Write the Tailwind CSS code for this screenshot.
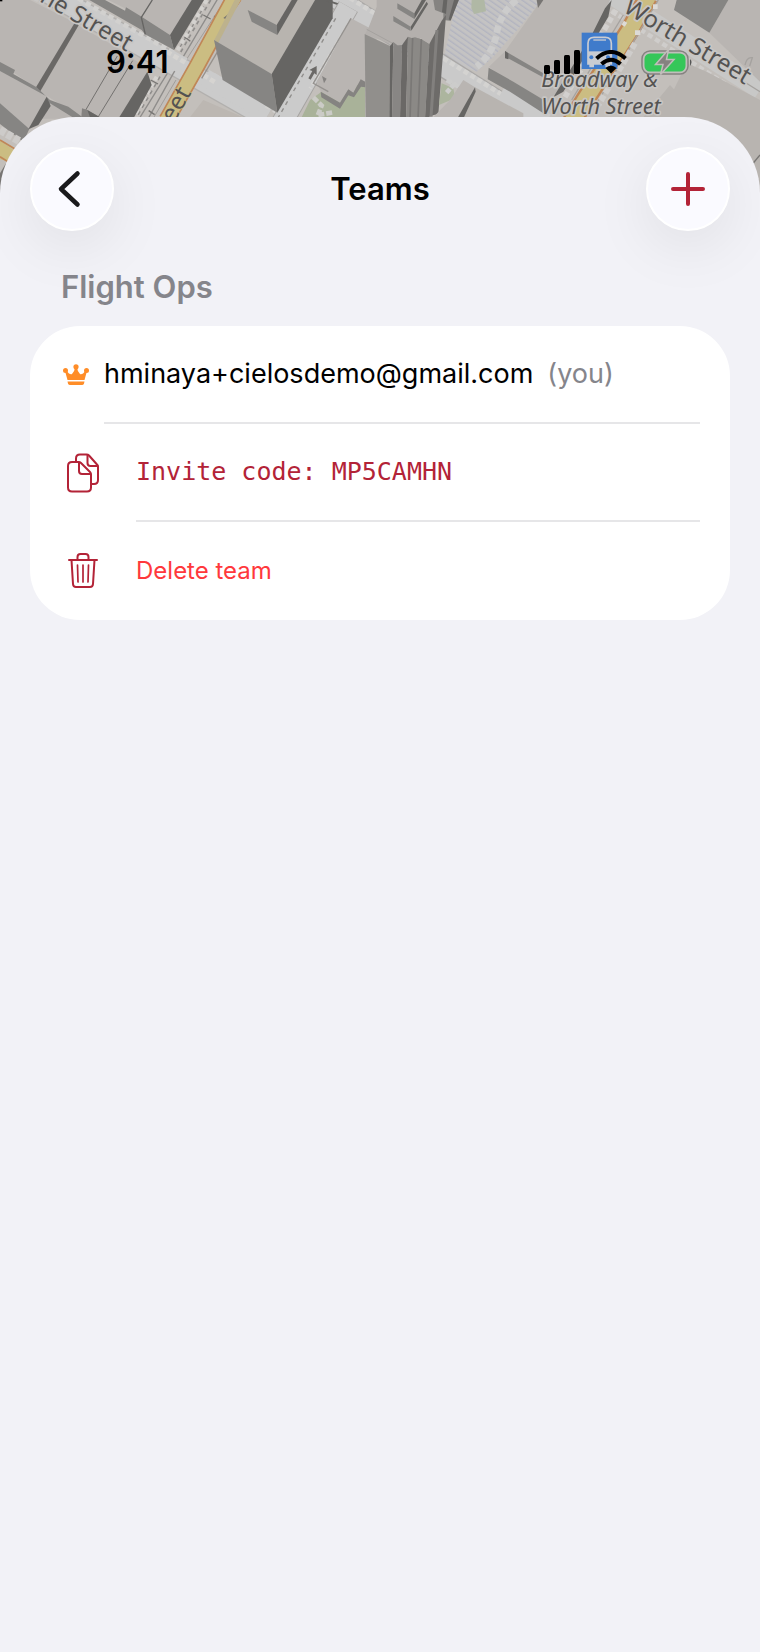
<!DOCTYPE html>
<html lang="en">
<head>
<meta charset="utf-8">
<meta name="viewport" content="width=device-width, initial-scale=1">
<title>Teams</title>
<script src="https://cdn.jsdelivr.net/npm/@tailwindcss/browser@4"></script>
</head>
<body class="relative flex min-h-screen flex-col bg-[#f2f2f7] font-['Inter','Liberation_Sans',sans-serif] text-black">

<!-- Map backdrop behind the sheet, three units per pixel -->
<svg class="absolute inset-x-0 top-0 h-[230px] w-full" viewBox="0 0 2280 690" preserveAspectRatio="xMidYMin slice" aria-hidden="true">
  <defs>
    <pattern id="hatch" width="14" height="14" patternUnits="userSpaceOnUse" patternTransform="rotate(-55)"><rect width="14" height="14" fill="#c4c3c3"/><rect width="4" height="14" fill="#b2b4c0"/></pattern>
  </defs>
  <rect width="2280" height="690" fill="#c3bfbb"/>
  <!-- plaza -->
  <path d="M1370 0H1625L1560 80L1480 170L1430 215L1330 180Z" fill="url(#hatch)"/>
  <path d="M1415 0h38l5 34-36 8-8-18z" fill="#b0b8a5"/>
  <path d="M1550 0Q1500 40 1490 100T1430 200" fill="none" stroke="#cccccc" stroke-width="20" stroke-dasharray="22 10"/>
  <!-- grey streets -->
  <g fill="none">
    <path d="M60 -70L800 352" stroke="#b2b0ae" stroke-width="68"/>
    <path d="M60 -70L800 352" stroke="#cbcbcb" stroke-width="60"/>
    <path d="M190 -30L520 158M640 225L830 335" stroke="#d2d1cf" stroke-width="14" stroke-dasharray="16 10"/>
    <path d="M1000 -10L1560 345" stroke="#aaa8a6" stroke-width="66"/>
    <path d="M1000 -10L1560 345" stroke="#cacaca" stroke-width="58"/>
    <path d="M1050 -6L1140 50M1330 175L1540 305" stroke="#d4d3d1" stroke-width="14" stroke-dasharray="15 9"/>
    <path d="M1045 20L845 370" stroke="#a6a4a2" stroke-width="66"/>
    <path d="M1045 20L845 370" stroke="#cbcbcb" stroke-width="60"/>
    <path d="M1007 55L835 352" stroke="#8f8d8b" stroke-width="4" stroke-dasharray="12 12"/>
    <path d="M1050 65L930 265" stroke="#d6d5d3" stroke-width="10" stroke-dasharray="14 9"/>
    <path d="M1500 285L1640 365" stroke="#cacaca" stroke-width="50"/>
    <path d="M1810 -30L2280 270" stroke="#c8c8c7" stroke-width="56"/>
    <path d="M1790 5L2260 305" stroke="#cfcdcb" stroke-width="13" stroke-dasharray="16 10"/>
  </g>
  <!-- parallel tracks and avenue, left -->
  <g fill="none">
    <path d="M657 -10L520 220L420 400M612 20L535 150M502 220L420 352" stroke="#8f8d8b" stroke-width="4"/>
    <path d="M682 -10L555 185M528 240L445 380" stroke="#a19e9b" stroke-width="3"/>
    <path d="M632 0L540 160M480 230L410 352" stroke="#918f8d" stroke-width="5" stroke-dasharray="12 12"/>
    <path d="M610 45l22 12M642 48l16 10M553 110l18 14M452 240l22 12M446 332l18 12" stroke="#777573" stroke-width="4"/>
    <path d="M620 0L530 155M470 230L400 352" stroke="#d4d2cf" stroke-width="12" stroke-dasharray="13 10"/>
    <path d="M704 -10L590 200L500 360" stroke="#c08757" stroke-width="50"/>
    <path d="M704 -10L590 200L500 360" stroke="#cbbd82" stroke-width="40"/>
    <path d="M500 170L550 198M615 233L780 325" stroke="#cbcbcb" stroke-width="52"/>
    <path d="M500 155L560 190M610 225L650 250" stroke="#d6d4d1" stroke-width="14" stroke-dasharray="16 8"/>
    <path d="M745 0L605 235" stroke="#96918c" stroke-width="4"/>
  </g>
  <path d="M570 352L610 300L730 352Z" fill="#bcb7b2"/>
  <path d="M668 76l10-18-8-4 16-13 1 23-7-3-8 18z" fill="#77756f"/>

  <!-- left blocks -->
  <path d="M0 0H90L228 70L110 265L0 190Z" fill="#b9b5b2"/>
  <path d="M232 75L350 142L455 215L370 352H245L120 275Z" fill="#b9b5b2"/>
  <path d="M226 65L236 76L120 275L108 262Z" fill="#6a6866"/>
  <path d="M352 168L256 332M398 182L295 350" stroke="#73716f" stroke-width="3" fill="none"/>
  <path d="M0 186L45 210L40 222L110 262L150 300L205 320L246 350V356H215L140 308L0 215Z" fill="#868583"/>
  <path d="M442 215L455 255L400 356H355Z" fill="#666563"/>
  <path d="M150 310L225 356H118Z" fill="#b9b5b2"/>
  <path d="M246 325L262 330L300 352H244Z" fill="#858381"/><path d="M262 330L300 352H270Z" fill="#666563"/>
  <path d="M0 213L142 290L90 387L0 335Z" fill="#b9b5b2"/>
  <path d="M0 310L88 387L70 425L0 372Z" fill="#868583"/>
  <path d="M140 290L152 318L115 375L85 388Z" fill="#666563"/>
  <path d="M0 390L70 430" stroke="#cdcbc9" stroke-width="24" stroke-dasharray="18 6"/>
  <path d="M0 422L50 455L30 485L0 478Z" fill="#cbbd82"/>
  <path d="M0 420L50 450M0 470L35 492" stroke="#c08757" stroke-width="5"/>
  <path d="M0 500L30 510V600H0Z" fill="#c2bfbc"/><path d="M0 520L18 490V560L0 600Z" fill="#777573"/>
  <!-- top blocks -->
  <path d="M325 0H575L510 105L425 50Z" fill="#b9b5b2"/>
  <path d="M268 0H315L375 32L378 22L425 50L510 105L522 150L435 103L425 90Z" fill="#868583"/>
  <path d="M575 0H612L522 150L510 105Z" fill="#666563"/>
  <path d="M457 0L424 52L436 103" stroke="#666563" stroke-width="4" fill="none"/>

  <!-- central left building -->
  <path d="M725 0H945L815 222L642 122Z" fill="#b8b4af"/>
  <path d="M704 0H722L655 128L642 122Z" fill="#bdb28d"/>
  <path d="M642 120L815 222L832 338L668 240Z" fill="#868583"/>
  <path d="M945 0H998V55L832 338L815 222Z" fill="#666563"/>
  <path d="M743 30L830 75L832 105L755 65Z" fill="#868583"/><path d="M875 0H893L832 105L830 75Z" fill="#666563"/>
  <path d="M985 0L1015 10L1010 14L980 4Z" fill="#666563"/>
  <path d="M925 235l12-22-9-3 22-12 0 27-7-5-11 19z" fill="#6b6967"/>

  <!-- park and middle block -->
  <path d="M905 352L930 300L965 275L1095 250V352Z" fill="#a9b299"/>
  <path d="M940 292l25 25-12 30M955 345l45-8" stroke="#cbcbc6" stroke-width="14" stroke-dasharray="18 6" fill="none"/>
  <path d="M1053 55L1130 95V250L1080 240L1060 278L1045 270L1020 308L963 275L950 245Z" fill="#b9b5b2"/>
  <path d="M962 275L1020 308L1045 268L1060 278L1082 238L1096 245V262L1083 260L1062 292L1045 286L1020 326L964 292Z" fill="#858381"/>
  <path d="M1053 55L940 250L985 275" stroke="#95928f" stroke-width="4" fill="none"/>
  <path d="M966 228l14 8-8 14z" fill="#858381"/>

  <!-- tower -->
  <path d="M1105 85L1130 20V0H1300L1338 45L1325 65L1288 132L1262 115H1225L1205 135H1180L1095 102Z" fill="#b4b0ad"/>
  <path d="M1300 0H1377L1350 62L1330 60V40L1305 30Z" fill="#858381"/><path d="M1330 0h12l-4 42-12-6zM1362 0h14l-24 62-6-4z" fill="#666563"/>
  <path d="M1192 10L1243 40V57L1192 26ZM1180 48L1232 80V93L1180 64Z" fill="#868583"/>
  <path d="M1243 40L1265 0H1278L1243 57ZM1232 80L1280 5L1284 12L1234 92Z" fill="#666563"/>
  <path d="M1100 88L1290 190" stroke="#a5a29f" stroke-width="3"/>
  <path d="M1094 102L1170 138L1168 356H1097Z" fill="#918f8c"/>
  <path d="M1170 138L1180 126L1176 356H1168Z" fill="#666563"/>
  <path d="M1180 126L1192 136L1206 135L1200 356H1176Z" fill="#888684"/>
  <path d="M1206 135L1224 110L1218 356H1200Z" fill="#6a6866"/>
  <path d="M1224 110L1235 114L1245 112L1265 118L1288 132L1275 356H1218Z" fill="#8b8986"/>
  <path d="M1238 114L1230 356M1264 118L1254 356" stroke="#7a7876" stroke-width="5"/>
  <path d="M1288 132L1325 62L1338 45L1315 342L1298 346L1275 356Z" fill="#6d6b69"/>
  <path d="M1311 90L1293 350" stroke="#82807e" stroke-width="9"/>
  <path d="M1325 250l35 15 5 30-48 20z" fill="#acb59e"/><path d="M1340 240l50 28M1365 250l-25 28" stroke="#cccccb" stroke-width="14" stroke-dasharray="18 5"/>

  <!-- right-middle blocks -->
  <path d="M1390 240L1425 262L1375 352H1300L1350 300Z" fill="#b9b5b2"/>
  <path d="M1425 262L1570 340V352H1390Z" fill="#b8b4b0"/>
  <path d="M1425 262L1427 275L1392 352H1374Z" fill="#666563"/>
  <path d="M1467 200L1516 153L1610 20L1620 0H1830L1790 85L1675 272L1620 330Z" fill="#b9b5b2"/>
  <path d="M1466 203L1540 245L1640 305L1630 340L1530 275L1463 238Z" fill="#868583"/>
  <path d="M1515 153L1630 220L1640 238L1515 170Z" fill="#868583"/>
  <path d="M1515 153V175L1525 178V160Z" fill="#666563"/>
  <path d="M1610 0H1630L1614 24Z" fill="#777573"/>
  <path d="M1835 0L1825 50L1745 185L1690 275L1660 292L1775 105L1815 25Z" fill="#666563"/>
  <path d="M1848 30L1690 300" stroke="#d2d0ce" stroke-width="16" stroke-dasharray="17 9"/>
  <path d="M1870 45L1715 300" stroke="#a5a29f" stroke-width="4"/>

  <!-- right-hand avenue -->
  <path d="M1945 -10L1890 90L1755 300L1715 365" stroke="#c08757" stroke-width="60" fill="none"/>
  <path d="M1945 -10L1890 90L1755 300L1715 365" stroke="#cbbd82" stroke-width="46" fill="none"/>
  <path d="M1975 0L1790 310" stroke="#a6a3a0" stroke-width="4"/>
  <path d="M1905 130L1795 315" stroke="#cfcdcb" stroke-width="18" stroke-dasharray="18 8"/>
  <path d="M1973 20l-14 0M1921 98l-16 0M1868 68l10 6" stroke="#dcdad7" stroke-width="14"/>
  <path d="M2060 190L2120 215L2280 300V690H2200L1930 352L2010 255L2022 268Z" fill="#b8b4b0"/>
  <path d="M2185 0H2280V245L2128 98Z" fill="#b9b5b2"/>
  <path d="M2030 0H2185L2128 98L2022 30Z" fill="#868583"/>
  <path d="M2235 195q5-25 22-22l-8 25M2200 225L2280 275" stroke="#a5a29f" stroke-width="4" fill="none"/>
  <path d="M2255 495L2280 465" stroke="#777573" stroke-width="4"/>

  <!-- bus stop -->
  <rect x="1745" y="98" width="107" height="109" fill="#3f7bcb"/>
  <g fill="none" stroke="#c9ccd2" stroke-width="5">
    <path d="M1764 192V130Q1764 112 1782 112H1816Q1834 112 1834 130V192Z"/>
    <path d="M1780 120H1818" stroke-width="4"/>
  </g>
  <path d="M1764 154H1834V192H1764Z" fill="#c9ccd2"/>
  <circle cx="1774" cy="172" r="6" fill="#3f7bcb"/><circle cx="1824" cy="172" r="6" fill="#3f7bcb"/>
  <path d="M1768 190h14v12h-14zM1816 190h14v12h-14z" fill="#c9ccd2"/>

  <!-- labels -->
  <g font-family="'Noto Sans','Open Sans',sans-serif" fill="#545352" stroke="#c8c6c4" stroke-width="10" stroke-linejoin="round" paint-order="stroke" font-size="72">
    <text transform="translate(100 -6) rotate(30)">ine Street</text>
    <text transform="translate(1867 34) rotate(31)">Worth Street</text>
    <text transform="translate(494 418) rotate(-60)" stroke="#cbbd82" stroke-width="4">treet</text>
    <g font-style="italic" font-size="65">
      <text x="1624" y="260">Broadway &amp;</text>
      <text x="1624" y="341">Worth Street</text>
    </g>
  </g>
  <path d="M0 0H7V4H0Z"/>
</svg>

<header class="relative flex h-[117px] items-center justify-between pt-1.5 pr-[67px] pl-[106px]">
  <time class="text-[31px] leading-9 font-semibold">9:41</time>
  <div class="flex items-center gap-3.5">
    <svg class="h-6 w-[37px]" viewBox="0 0 37 24" role="img" aria-label="Signal strength"><rect y="15" width="6" height="9" rx="1.5"/><rect x="10" y="10" width="6" height="14" rx="1.5"/><rect x="20" y="5" width="6" height="19" rx="1.5"/><rect x="30" width="6" height="24" rx="1.5"/></svg>
    <svg class="h-6 w-8" viewBox="0 0 32 24" role="img" aria-label="Wi-Fi"><g fill="none" stroke="#000" stroke-width="4"><path d="M1.500 8.500Q16 -4.500 30.500 8.500"/><path d="M6.500 14Q16 5.500 25.500 14"/></g><path d="M10.500 18Q16 13.500 21.500 18L16 23.500Z"/></svg>
    <svg class="h-7 w-[52px]" viewBox="0 0 52 28" role="img" aria-label="Battery charging"><rect x="1" y="3" width="46" height="23" rx="8" fill="#c1bebb" stroke="#858280" stroke-width="1.500"/><rect x="3.500" y="5.500" width="41" height="18" rx="5.500" fill="#35c759"/><path d="M49 11q3 3 0 7z" fill="#555"/><path d="M27.500 1.500L14.500 16.500H22L19.500 26.500L33 11.500H25.500Z" fill="#858280" stroke="#c1bebb" stroke-width="1.500"/></svg>
  </div>
</header>

<main class="relative grow overflow-hidden rounded-t-[76px] bg-[#f2f2f7] px-[30px] pt-[30px]">
  <div class="flex items-center justify-between">
    <button type="button" aria-label="Back" class="flex size-[84px] items-center justify-center rounded-full border-2 border-white bg-[#fafaff] shadow-[0_16px_60px_rgba(0,0,0,0.08)]">
      <svg class="size-10" viewBox="0 0 40 40" fill="none" stroke="#1a1a1c" stroke-width="4.500" stroke-linecap="round" stroke-linejoin="round"><path d="M25.500 4.500L9 20L25.500 35.500"/></svg>
    </button>
    <h1 class="text-[31px] leading-9 font-semibold">Teams</h1>
    <button type="button" aria-label="Add team" class="flex size-[84px] items-center justify-center rounded-full border-2 border-white bg-[#fafaff] shadow-[0_16px_60px_rgba(0,0,0,0.08)]">
      <svg class="size-10" viewBox="0 0 40 40" fill="none" stroke="#b32337" stroke-width="4" stroke-linecap="round"><path d="M20 5V35M5 20H35"/></svg>
    </button>
  </div>

  <section aria-labelledby="team-name">
    <h2 id="team-name" class="mt-9 mb-[19px] px-[31px] text-[31px] leading-10 font-semibold text-[#85858b]">Flight Ops</h2>
    <ul class="rounded-[50px] bg-white pr-[30px] pl-8">
      <li class="flex h-[98px] items-center">
        <svg class="mr-3.5 h-[22px] w-7 shrink-0" viewBox="0 0 28 22" fill="#ff8d28" role="img" aria-label="Owner"><circle cx="3.500" cy="6.500" r="2.500"/><circle cx="14" cy="2.800" r="2.600"/><circle cx="24.500" cy="6.500" r="2.500"/><path d="M3 7L4.500 6.500Q8 11.500 10 10Q12.500 8 13 3.500H15Q15.500 8 18 10Q20 11.500 23.500 6.500L25 7L22.500 16H5.500Z"/><path d="M5.500 17.500H22.500L22 19.500Q21.500 21 20 21H8Q6.500 21 6 19.500Z"/></svg>
        <div class="flex h-full grow items-center gap-3.5 border-b-2 border-[#e6e6e8] text-[27px] leading-9">
          <span>hminaya+cielosdemo@gmail.com</span>
          <span class="text-[#85858b]">(you)</span>
        </div>
      </li>
      <li>
        <button type="button" class="flex h-[98px] w-full items-center text-left">
          <svg class="mr-[3px] ml-[5px] h-10 w-8 shrink-0" viewBox="0 0 32 40" fill="none" stroke="#b32337" stroke-width="2" stroke-linecap="round" stroke-linejoin="round"><path d="M24 31H27Q31 31 31 27V13.500Q31 12.500 30 11.500L22 2.500Q21 1.500 19.500 1.500H13Q9 1.500 9 5.500V9"/><path d="M20.500 2V10Q20.500 13 23.500 13H30.500"/><path d="M5 9H11.500Q13 9 14 10L23 19Q24 20 24 21.500V34.500Q24 38.500 20 38.500H5Q1 38.500 1 34.500V13Q1 9 5 9Z"/><path d="M12 9.500V18Q12 21 15 21H23.500"/></svg>
          <span class="ml-[34px] flex h-full grow items-center border-b-2 border-[#e6e6e8] font-['DejaVu_Sans_Mono','Liberation_Mono',monospace] text-[25px] leading-9 text-[#b32337]">Invite code: MP5CAMHN</span>
        </button>
      </li>
      <li>
        <button type="button" class="flex h-[98px] w-full items-center text-left">
          <svg class="mr-[3px] ml-[5px] h-10 w-8 shrink-0" viewBox="0 0 32 40" fill="none" stroke="#b32337" stroke-width="2" stroke-linecap="round" stroke-linejoin="round"><path d="M2 9H30M10.500 9V6Q10.500 3 13.500 3H18.500Q21.500 3 21.500 6V9"/><path d="M4.500 9L6 33Q6.200 36 9 36H23Q25.800 36 26 33L27.500 9"/><path stroke-width="1.700" d="M10.500 14L11 31M16 14V31M21.500 14L21 31"/></svg>
          <span class="ml-[34px] grow text-2xl leading-9 text-[#ff383c]">Delete team</span>
        </button>
      </li>
    </ul>
  </section>
</main>
</body>
</html>
